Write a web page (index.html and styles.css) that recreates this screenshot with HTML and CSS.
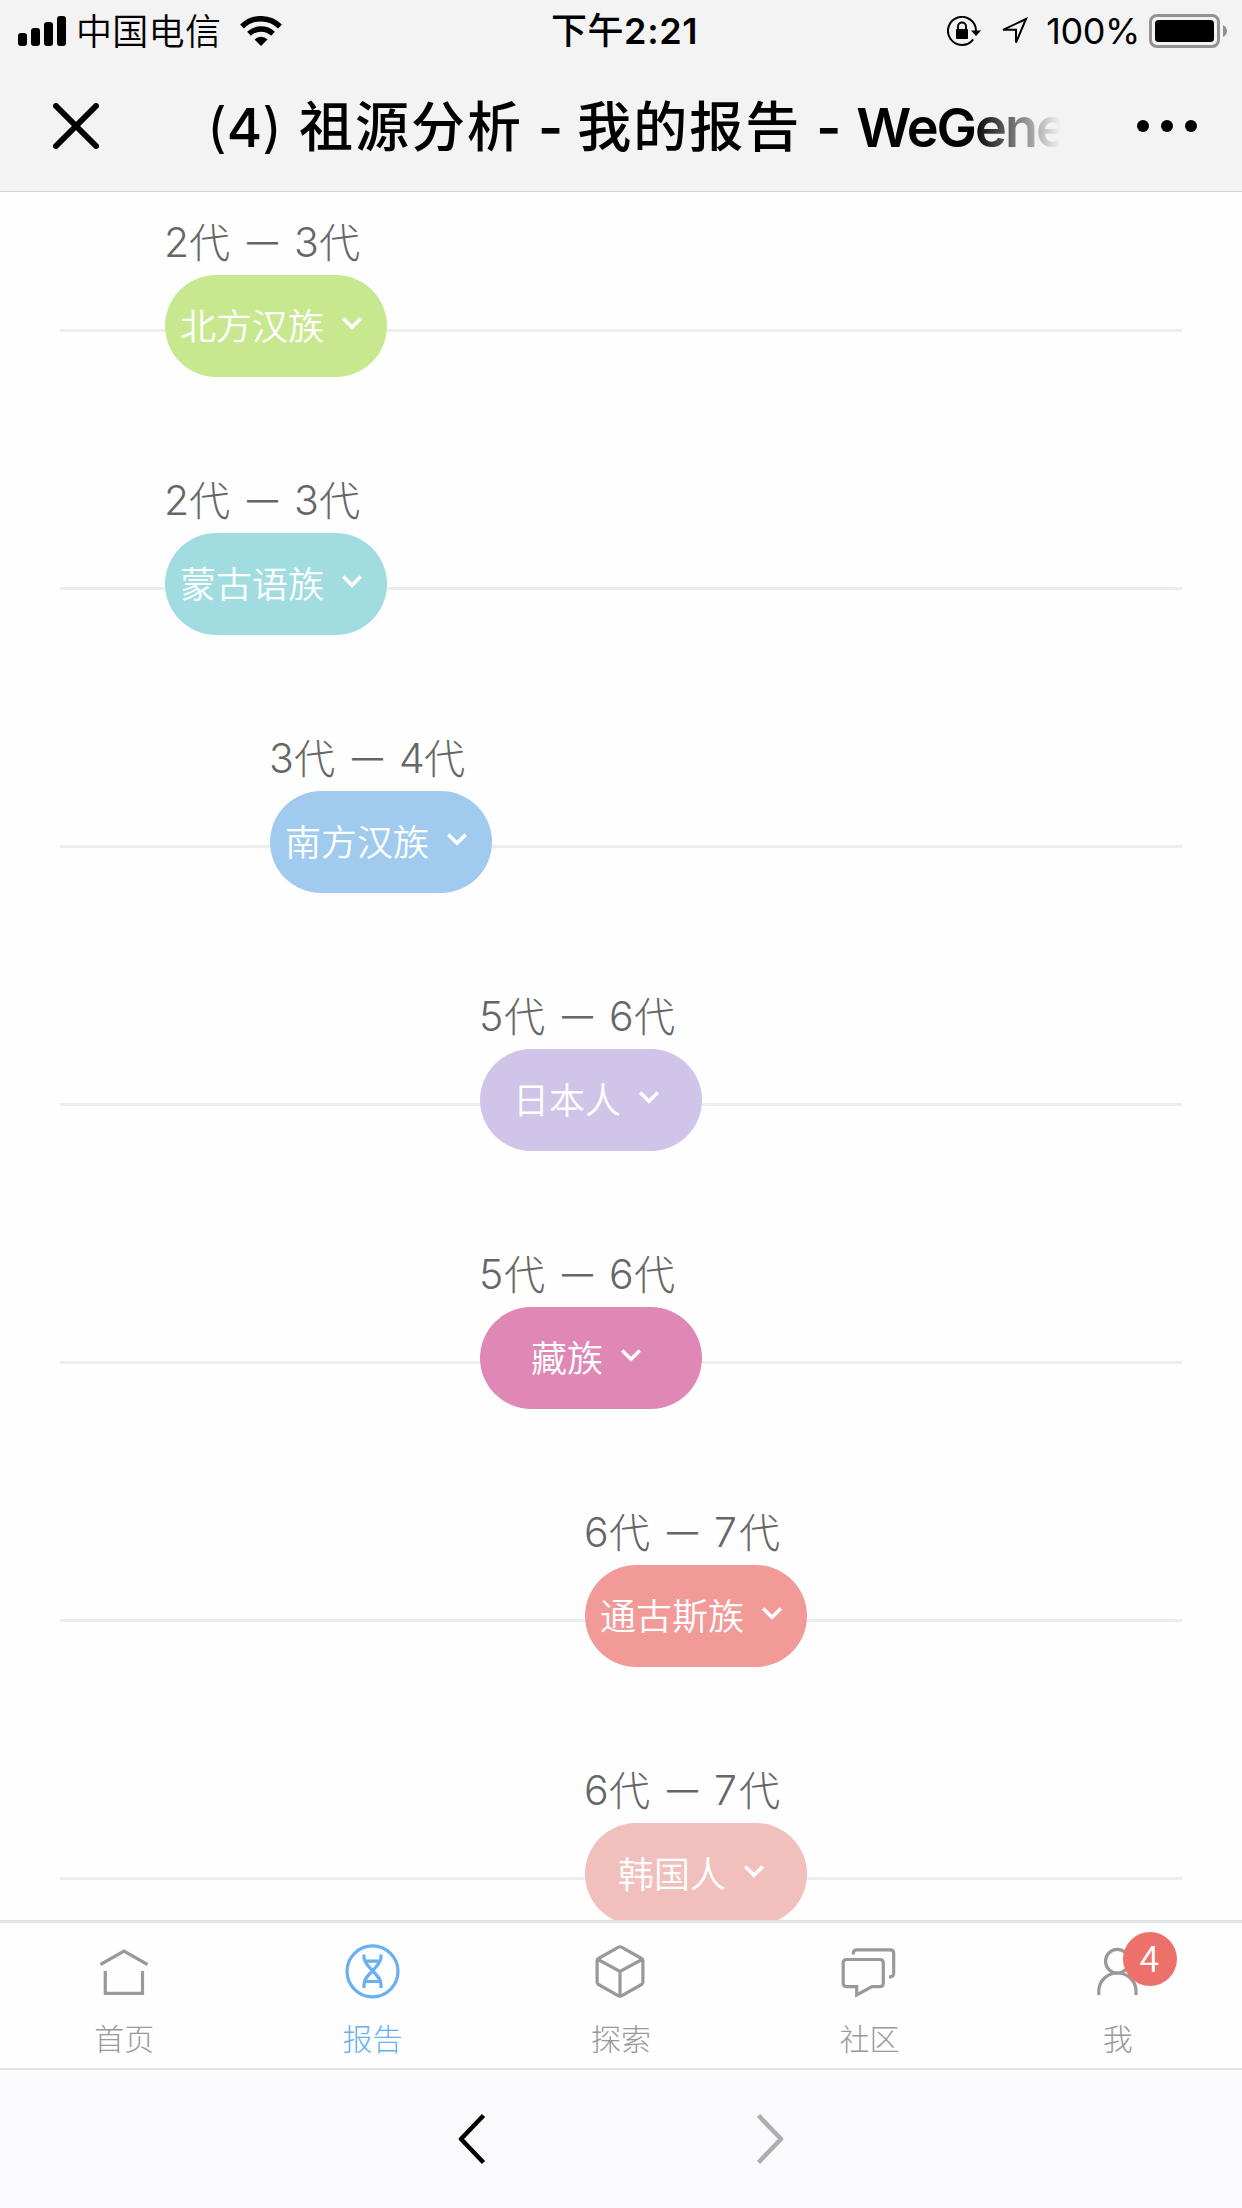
FILE: index.html
```html
<!DOCTYPE html>
<html lang="zh-CN">
<head>
    <meta charset="UTF-8">
    <meta name="viewport" content="width=device-width, initial-scale=1.0">
    <title>祖源分析 - 我的报告 - WeGene</title>
    <link rel="stylesheet" href="styles.css">
</head>
<body>
    <header class="header">
        <div class="status-bar">
            <div class="status-left">
                <svg class="signal" width="48" height="30" viewBox="0 0 48 30">
                    <rect x="0" y="17" width="9" height="13" rx="3"/>
                    <rect x="13" y="12" width="9" height="18" rx="3"/>
                    <rect x="26" y="6" width="9" height="24" rx="3"/>
                    <rect x="39" y="0" width="9" height="30" rx="3"/>
                </svg>
                <span class="carrier">中国电信</span>
                <svg class="wifi" width="42" height="30" viewBox="0 0 42 30">
                    <path d="M2 10.5a27 27 0 0 1 38 0M9 17.8a17.5 17.5 0 0 1 24 0" fill="none" stroke="#000" stroke-width="5.4"/>
                    <path d="M21 30l-6.5-6.6a9.5 9.5 0 0 1 13 0z"/>
                </svg>
            </div>
            <div class="status-time">下午<span class="clock">2:21</span></div>
            <div class="status-right">
                <svg class="lock" width="34" height="30" viewBox="0 0 34 30">
                    <path d="M26.2 23.3A14 14 0 1 1 29 15" fill="none" stroke="#000" stroke-width="2"/>
                    <path d="M24 14.5h10l-5 5.5z"/>
                    <rect x="9" y="13" width="12" height="10" rx="1"/>
                    <path d="M11 14v-3.500a4 4 0 0 1 8 0v3.500" fill="none" stroke="#000" stroke-width="2"/>
                </svg>
                <svg class="location" width="30" height="30" viewBox="0 0 30 30">
                    <path d="M4 13.800L27 3 17 26.500V13.800z" fill="none" stroke="#000" stroke-width="2"/>
                </svg>
                <span class="percent">100%</span>
                <svg class="battery" width="78" height="34" viewBox="0 0 78 34">
                    <rect x="1.500" y="1.500" width="68" height="31" rx="6.500" fill="none" stroke="#929293" stroke-width="3"/>
                    <rect x="6" y="6" width="59" height="22" rx="3.500"/>
                    <path d="M74 11q4 2 4 6t-4 6z" fill="#929293"/>
                </svg>
            </div>
        </div>
        <div class="title-bar">
            <svg class="close" width="46" height="46" viewBox="0 0 46 46">
                <path d="M3 3l40 40M43 3L3 43"/>
            </svg>
            <h1 class="title"><span class="count"><span class="paren">(</span>4<span class="paren">)</span></span>祖源分析<span class="dash">-</span>我的报告<span class="dash">-</span><span class="brand">WeGene</span></h1>
            <svg class="more" width="60" height="12" viewBox="0 0 60 12">
                <circle cx="6" cy="6" r="6"/>
                <circle cx="30" cy="6" r="6"/>
                <circle cx="54" cy="6" r="6"/>
            </svg>
        </div>
    </header>

    <main class="timeline">
        <section class="row gen-2">
            <div class="period"><b>2</b>代<i>—</i><b>3</b>代</div>
            <div class="track"><button class="pill north-han"><span>北方汉族</span><svg class="chevron" viewBox="0 0 20 13"><path d="M1.200 1.500L10 10.200l8.800-8.700"/></svg></button></div>
        </section>
        <section class="row gen-2">
            <div class="period"><b>2</b>代<i>—</i><b>3</b>代</div>
            <div class="track"><button class="pill mongol"><span>蒙古语族</span><svg class="chevron" viewBox="0 0 20 13"><path d="M1.200 1.500L10 10.200l8.800-8.700"/></svg></button></div>
        </section>
        <section class="row gen-3">
            <div class="period"><b>3</b>代<i>—</i><b>4</b>代</div>
            <div class="track"><button class="pill south-han"><span>南方汉族</span><svg class="chevron" viewBox="0 0 20 13"><path d="M1.200 1.500L10 10.200l8.800-8.700"/></svg></button></div>
        </section>
        <section class="row gen-5">
            <div class="period"><b>5</b>代<i>—</i><b>6</b>代</div>
            <div class="track"><button class="pill japanese"><span>日本人</span><svg class="chevron" viewBox="0 0 20 13"><path d="M1.200 1.500L10 10.200l8.800-8.700"/></svg></button></div>
        </section>
        <section class="row gen-5">
            <div class="period"><b>5</b>代<i>—</i><b>6</b>代</div>
            <div class="track"><button class="pill tibetan"><span>藏族</span><svg class="chevron" viewBox="0 0 20 13"><path d="M1.200 1.500L10 10.200l8.800-8.700"/></svg></button></div>
        </section>
        <section class="row gen-6">
            <div class="period"><b>6</b>代<i>—</i><b>7</b>代</div>
            <div class="track"><button class="pill tungus"><span>通古斯族</span><svg class="chevron" viewBox="0 0 20 13"><path d="M1.200 1.500L10 10.200l8.800-8.700"/></svg></button></div>
        </section>
        <section class="row gen-6">
            <div class="period"><b>6</b>代<i>—</i><b>7</b>代</div>
            <div class="track"><button class="pill korean"><span>韩国人</span><svg class="chevron" viewBox="0 0 20 13"><path d="M1.200 1.500L10 10.200l8.800-8.700"/></svg></button></div>
        </section>
    </main>

    <nav class="tabs">
        <a class="tab">
            <svg class="tab-icon" viewBox="0 0 60 60">
                <path d="M6.500 23.500L30 10.200l23.500 13.300M11.300 30v22.300h37.200V30"/>
            </svg>
            <span>首页</span>
        </a>
        <a class="tab active">
            <svg class="tab-icon" viewBox="0 0 60 60">
                <circle cx="29.500" cy="30.300" r="25.500"/>
                <path d="M21 13.500v3C21 26 38 33 38 43.500V47M38 13.500v3C38 26 21 33 21 43.500V47M22 20.200h15M22 40.500h15"/>
            </svg>
            <span>报告</span>
        </a>
        <a class="tab">
            <svg class="tab-icon" viewBox="0 0 60 60">
                <path d="M27.500 6.200q1.500-.800 3 0l20 11.300q1.400.800 1.400 2.500v21q0 1.700-1.400 2.500l-20 11.300q-1.500.800-3 0l-20-11.300q-1.400-.800-1.400-2.500V20q0-1.700 1.400-2.500zM7 18.500l22 12 22-12M29 30.500V55"/>
            </svg>
            <span>探索</span>
        </a>
        <a class="tab">
            <svg class="tab-icon" viewBox="0 0 60 60">
                <path d="M7.500 18.500h33.500q3.300 0 3.300 3.300v20.500q0 3.300-3.300 3.300H33L17.700 54v-8.400H7.500q-3.300 0-3.300-3.300V21.800q0-3.300 3.300-3.300z"/>
                <path d="M14.300 13.500v-1.200q0-3.500 3.500-3.500h33.400q3.500 0 3.500 3.500v20q0 3.500-3.500 3.500H50"/>
            </svg>
            <span>社区</span>
        </a>
        <a class="tab">
            <svg class="tab-icon" viewBox="0 0 60 60">
                <circle cx="29.300" cy="20.200" r="11.800"/>
                <path d="M10.800 54v-4a18.600 18 0 0 1 37.200 0v4"/>
            </svg>
            <span>我</span>
            <em class="badge">4</em>
        </a>
    </nav>

    <footer class="browser-nav">
        <svg class="back" width="30" height="54" viewBox="0 0 30 54">
            <path d="M25.500 3.500L3 27l22.500 23.500"/>
        </svg>
        <svg class="forward" width="30" height="54" viewBox="0 0 30 54">
            <path d="M4.500 3.500L27 27 4.500 50.500"/>
        </svg>
    </footer>
</body>
</html>
```

FILE: styles.css
```css
* {
    box-sizing: border-box;
}
body {
    display: flex;
    flex-direction: column;
    width: 1242px;
    height: 2208px;
    margin: 0;
    overflow: hidden;
    background-color: #fefefe;
    font-family: Inter, "Noto Sans CJK SC", sans-serif;
}
svg {
    flex: none;
}
.header {
    height: 192px;
    background-color: #f3f3f3;
    border-bottom: 1px solid #d5d5d5;
}

/* status bar */
.status-bar {
    display: grid;
    grid-template-columns: 1fr auto 1fr;
    height: 60px;
    padding: 0 15px 0 18px;
    font-size: 36px;
    line-height: 60px;
}
.status-left,
.status-right {
    display: flex;
    align-items: center;
}
.status-right {
    justify-content: flex-end;
}
.carrier {
    margin-left: 10px;
    font-family: "Noto Sans CJK SC", sans-serif;
    font-weight: 350;
    line-height: 57px;
    padding-bottom: 3px;
    letter-spacing: 0.3px;
}
.wifi {
    margin-left: 19px;
}
.status-time {
    padding: 1px 0 0 4px;
    font-weight: 500;
    letter-spacing: 0.6px;
}
.clock {
    font-weight: 600;
}
.percent {
    padding-top: 1px;
    letter-spacing: -0.4px;
}
.location {
    margin: 0 17px 0 18px;
}
.battery {
    margin-left: 9px;
}

/* title bar */
.title-bar {
    display: flex;
    align-items: center;
    height: 132px;
    padding: 0 45px 0 53px;
}
.close {
    fill: none;
    stroke: #000;
    stroke-width: 6;
    stroke-linecap: round;
}
.title {
    width: 854px;
    margin: 0 76px 0 108px;
    padding-top: 4px;
    overflow: hidden;
    white-space: nowrap;
    font-size: 54px;
    font-weight: 500;
    line-height: 80px;
    letter-spacing: 2px;
    -webkit-mask-image: linear-gradient(to right, #000 765px, transparent 854px);
    mask-image: linear-gradient(to right, #000 765px, transparent 854px);
}
.count {
    display: inline-block;
    width: 92px;
    letter-spacing: 0;
}
.paren {
    font-weight: 400;
}
.dash {
    margin: 0 12px 0 15px;
    font-weight: 600;
}
.brand {
    margin-left: 1px;
    font-weight: 600;
    letter-spacing: -2px;
}

/* generations */
.timeline {
    height: 1728px;
    padding: 18px 60px 0;
    overflow: hidden;
}
.row {
    height: 258px;
}
.period {
    display: flex;
    align-items: center;
    height: 59px;
    margin-bottom: 6px;
    color: #666;
    font-family: "Noto Sans CJK SC", sans-serif;
    font-size: 41px;
    font-weight: 300;
}
.period b {
    width: 24px;
    padding-top: 4px;
    font-family: Inter, sans-serif;
    font-weight: 300;
    text-indent: -1px;
}
.period i {
    width: 65px;
    padding-top: 4px;
    font-family: Inter, sans-serif;
    font-size: 31px;
    font-weight: 400;
    text-align: center;
    font-style: normal;
}
.track {
    display: flex;
}
.track::before,
.track::after {
    content: "";
    height: 3px;
    margin-top: 54px;
    background-color: #ebeef1;
}
.track::after {
    flex: 1;
}
.gen-2 .period { padding-left: 105px; }
.gen-3 .period { padding-left: 210px; }
.gen-5 .period { padding-left: 420px; }
.gen-6 .period { padding-left: 525px; }
.gen-2 .track::before { width: 105px; }
.gen-3 .track::before { width: 210px; }
.gen-5 .track::before { width: 420px; }
.gen-6 .track::before { width: 525px; }
.pill {
    display: flex;
    align-items: center;
    justify-content: center;
    width: 222px;
    height: 102px;
    padding: 0;
    border: none;
    border-radius: 51px;
    color: #fff;
    font-family: "Noto Sans CJK SC", sans-serif;
    font-size: 36px;
    font-weight: 350;
}
.pill span {
    padding-bottom: 5px;
}
.north-han { background-color: #c8e890; }
.mongol { background-color: #a0dce0; }
.south-han { background-color: #a0cbef; }
.japanese { background-color: #d0c4e8; }
.tibetan { background-color: #df87b5; }
.tungus { background-color: #f29a98; }
.korean { background-color: #f1c0bd; }
.chevron {
    width: 20px;
    height: 13px;
    margin: -6px 10px 0 18px;
    fill: none;
    stroke: #fff;
    stroke-width: 3.5;
}

/* bottom tabs */
.tabs {
    display: flex;
    height: 150px;
    border-top: 3px solid #dfe4e7;
    border-bottom: 2px solid #e3e3e3;
}
.tab {
    position: relative;
    display: flex;
    flex: 1;
    flex-direction: column;
    align-items: center;
    padding-top: 18px;
    color: #999;
    font-family: "Noto Sans CJK SC", sans-serif;
    font-size: 30px;
    font-weight: 300;
    line-height: 44px;
}
.tab-icon {
    width: 60px;
    height: 60px;
    margin-bottom: 14px;
    fill: none;
    stroke: currentColor;
    stroke-width: 3.2;
}
.active {
    color: #69b0f3;
}
.badge {
    position: absolute;
    top: 9px;
    left: 129px;
    width: 54px;
    height: 54px;
    border-radius: 50%;
    background-color: #ee706b;
    color: #fff;
    font-size: 36px;
    font-style: normal;
    font-weight: 350;
    line-height: 49px;
    text-align: center;
}

/* page history buttons */
.browser-nav {
    display: flex;
    align-items: center;
    justify-content: center;
    gap: 266px;
    height: 138px;
    background-color: #fafafc;
    fill: none;
    stroke: #000;
    stroke-width: 4.5;
    stroke-linejoin: round;
}
.forward {
    stroke: #adadaf;
}
```
